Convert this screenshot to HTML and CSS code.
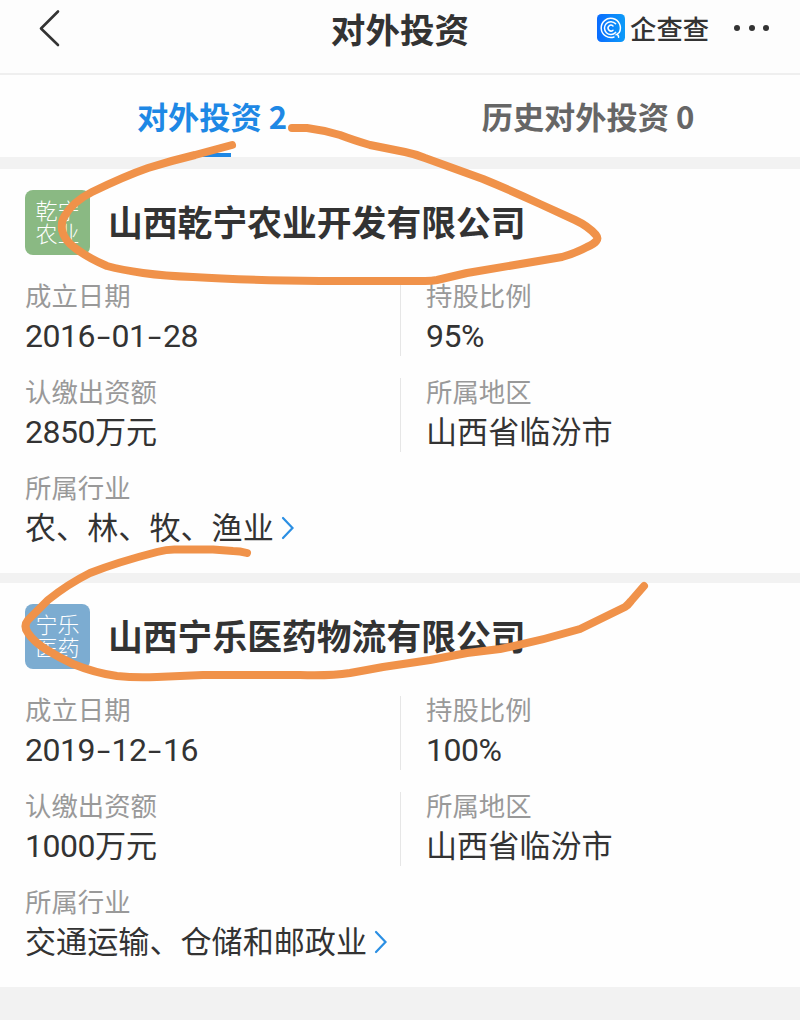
FILE: index.html
```html
<!DOCTYPE html>
<html lang="zh-CN">
<head>
    <meta charset="UTF-8">
    <title>对外投资</title>
    <link rel="stylesheet" href="styles.css">
</head>
<body>
    <header class="header">
        <svg class="back" width="24" height="40" viewBox="0 0 24 40" fill="none" stroke="#333" stroke-width="2.6" stroke-linecap="round" stroke-linejoin="round">
            <path d="M21 3.5 L4 20.5 L21 37"/>
        </svg>
        <h1>对外投资</h1>
        <div class="header-right">
            <svg class="brand-logo" width="28" height="28" viewBox="0 0 28 28" fill="none" stroke="#fff" stroke-linecap="round">
                <defs>
                    <linearGradient id="brand" x1="0" y1="0" x2="1" y2="0">
                        <stop offset="0" stop-color="#0a6cff"/>
                        <stop offset="1" stop-color="#0d9bf8"/>
                    </linearGradient>
                </defs>
                <rect width="28" height="28" rx="4.5" fill="url(#brand)" stroke="none"/>
                <path d="M17 23 A9.6 9.6 0 1 1 22.2 18.6 L19.5 20.6 Q21.5 20.8 21.6 23.2" stroke-width="1.5"/>
                <path d="M18.6 18.4 A6.4 6.4 0 1 1 18.6 9.8" stroke-width="1.5"/>
                <path d="M16 16.2 A2.9 2.9 0 1 1 16 12" stroke-width="1.5"/>
            </svg>
            <span class="brand-name">企查查</span>
            <span class="more"><i></i><i></i><i></i></span>
        </div>
    </header>

    <nav class="tabs">
        <a class="tab active">对外投资 2</a>
        <a class="tab">历史对外投资 0</a>
    </nav>

    <main>
        <section class="card">
            <div class="company">
                <div class="logo green">乾宁农业</div>
                <h2>山西乾宁农业开发有限公司</h2>
            </div>
            <div class="info">
                <div class="item">
                    <div class="label">成立日期</div>
                    <div class="value">2016<span class="dash">-</span>01<span class="dash">-</span>28</div>
                </div>
                <div class="item right">
                    <div class="label">持股比例</div>
                    <div class="value">95%</div>
                </div>
                <div class="item">
                    <div class="label">认缴出资额</div>
                    <div class="value">2850<span class="cn">万元</span></div>
                </div>
                <div class="item right">
                    <div class="label">所属地区</div>
                    <div class="value"><span class="cn">山西省临汾市</span></div>
                </div>
                <div class="item wide">
                    <div class="label">所属行业</div>
                    <div class="value">
                        <span class="cn">农、林、牧、渔业</span>
                        <svg class="arrow" width="14" height="24" viewBox="0 0 14 24" fill="none" stroke="#2b8fe3" stroke-width="2.2" stroke-linecap="round"><path d="M2 2 L11.5 12 L2 22"/></svg>
                    </div>
                </div>
            </div>
        </section>

        <section class="card">
            <div class="company">
                <div class="logo blue">宁乐医药</div>
                <h2>山西宁乐医药物流有限公司</h2>
            </div>
            <div class="info">
                <div class="item">
                    <div class="label">成立日期</div>
                    <div class="value">2019<span class="dash">-</span>12<span class="dash">-</span>16</div>
                </div>
                <div class="item right">
                    <div class="label">持股比例</div>
                    <div class="value">100%</div>
                </div>
                <div class="item">
                    <div class="label">认缴出资额</div>
                    <div class="value">1000<span class="cn">万元</span></div>
                </div>
                <div class="item right">
                    <div class="label">所属地区</div>
                    <div class="value"><span class="cn">山西省临汾市</span></div>
                </div>
                <div class="item wide">
                    <div class="label">所属行业</div>
                    <div class="value">
                        <span class="cn">交通运输、仓储和邮政业</span>
                        <svg class="arrow" width="14" height="24" viewBox="0 0 14 24" fill="none" stroke="#2b8fe3" stroke-width="2.2" stroke-linecap="round"><path d="M2 2 L11.5 12 L2 22"/></svg>
                    </div>
                </div>
            </div>
        </section>
    </main>

    <!-- hand-drawn marks around the company names -->
    <svg class="marks" width="800" height="1020" viewBox="0 0 800 1020" fill="none" stroke="#f0924a" stroke-width="8" stroke-linecap="round" stroke-linejoin="round">
        <path d="M292 128 H307 Q323 130 340 135 Q353 140 370 145 L405 152 Q415 154 425 158 L483 179 Q510 190 540 204 L575 220 Q588 226 596 235 Q601 241 587 247 Q576 253 562 257 L467 273 L437 280 Q432 281 425 281 H320 Q240 280 193 277 Q165 276 143 273 Q122 270 107 266 Q88 258 75 248 Q64 240 62 230 Q61 222 64 217 Q72 202 92 192 Q125 176 148 168 Q170 161 195 155 L232 145"/>
        <path d="M247 553 Q240 551 233 551 L213 549.5 H177 Q168 549 157 552 Q118 562 90 573 Q68 584 48 600 L28 620 Q23 626 28 633 Q34 642 47 650 Q60 658 73 664 Q95 673 117 676 Q135 678 157 677 L203 675 H300 Q330 676 350 673 Q367 670 383 667 L430 660 L467 653 L500 649 Q540 641 580 629 L625 607 Q628 605 631 601 L644 586"/>
    </svg>
</body>
</html>
```

FILE: styles.css
```css
* {
    box-sizing: border-box;
}
body {
    margin: 0;
    position: relative;
    width: 800px;
    height: 1020px;
    overflow: hidden;
    background-color: #f2f2f2;
    color: #333;
    font-family: "Noto Sans CJK SC", sans-serif;
}
h1, h2 {
    margin: 0;
}
.header {
    display: grid;
    grid-template-columns: 1fr auto 1fr;
    align-items: center;
    height: 75px;
    padding: 0 30px 18px 37px;
    background-color: #fdfdfd;
    border-bottom: 2px solid #efefef;
}
.header h1 {
    margin: 0 0 0 -7px;
    font-size: 34.6px;
    font-weight: 700;
    line-height: 50px;
}
.header-right {
    display: flex;
    align-items: center;
    justify-content: flex-end;
}
.brand-name {
    margin: 0 0 0 5px;
    font-size: 26.3px;
    font-weight: 500;
    line-height: 40px;
}
.more {
    display: flex;
    gap: 8.5px;
    margin-left: 25px;
    padding-right: 1px;
}
.more i {
    width: 6px;
    height: 6px;
    border-radius: 50%;
    background-color: #333;
}
.tabs {
    display: flex;
    height: 82px;
    padding: 0 24px;
    background-color: #fefefe;
}
.tab {
    display: flex;
    flex: 1;
    flex-direction: column;
    align-items: center;
    justify-content: space-between;
    padding-top: 18px;
    color: #666;
    font-size: 31.2px;
    font-weight: 700;
    line-height: 46px;
}
.tab.active {
    color: #1e88e5;
}
.tab.active::after {
    content: "";
    width: 37px;
    height: 4px;
    background-color: #1e88e5;
}
main {
    display: flex;
    flex-direction: column;
    gap: 10px;
    padding-top: 12px;
}
.card {
    height: 404px;
    padding: 21px 25px 25px;
    background-color: #fefefe;
}
.company {
    display: flex;
    align-items: center;
    gap: 18px;
    height: 65px;
}
.company h2 {
    margin-top: -3px;
    font-size: 34.8px;
    font-weight: 700;
    line-height: 50px;
}
.logo {
    width: 65px;
    height: 65px;
    padding: 8px 10px;
    border-radius: 8px;
    color: #fff;
    font-size: 22px;
    font-weight: 300;
    line-height: 23px;
    text-align: center;
}
.green {
    background-color: #8ab983;
}
.blue {
    background-color: #7cacd1;
}
.info {
    display: grid;
    grid-template-columns: 375px 1fr;
    row-gap: 22px;
    margin-top: 27px;
}
.item {
    height: 74px;
}
.item.right {
    padding-left: 25px;
    border-left: 1px solid #e6e6e6;
}
.item.wide {
    grid-column: 1 / 3;
}
.label {
    height: 28px;
    color: #999;
    font-size: 26.4px;
    line-height: 26px;
}
.value {
    display: flex;
    align-items: center;
    height: 40px;
    margin-top: 6px;
    font-family: Roboto, sans-serif;
    font-size: 32px;
    letter-spacing: -0.5px;
    line-height: 40px;
}
.cn {
    margin-top: -5px;
    font-family: "Noto Sans CJK SC", sans-serif;
    font-size: 31.1px;
    letter-spacing: 0;
}
.dash {
    width: 16.5px;
    text-align: center;
    transform: scaleX(1.5);
}
.arrow {
    margin-left: 7px;
}
.marks {
    position: absolute;
    top: 0;
    left: 0;
    pointer-events: none;
}
```
